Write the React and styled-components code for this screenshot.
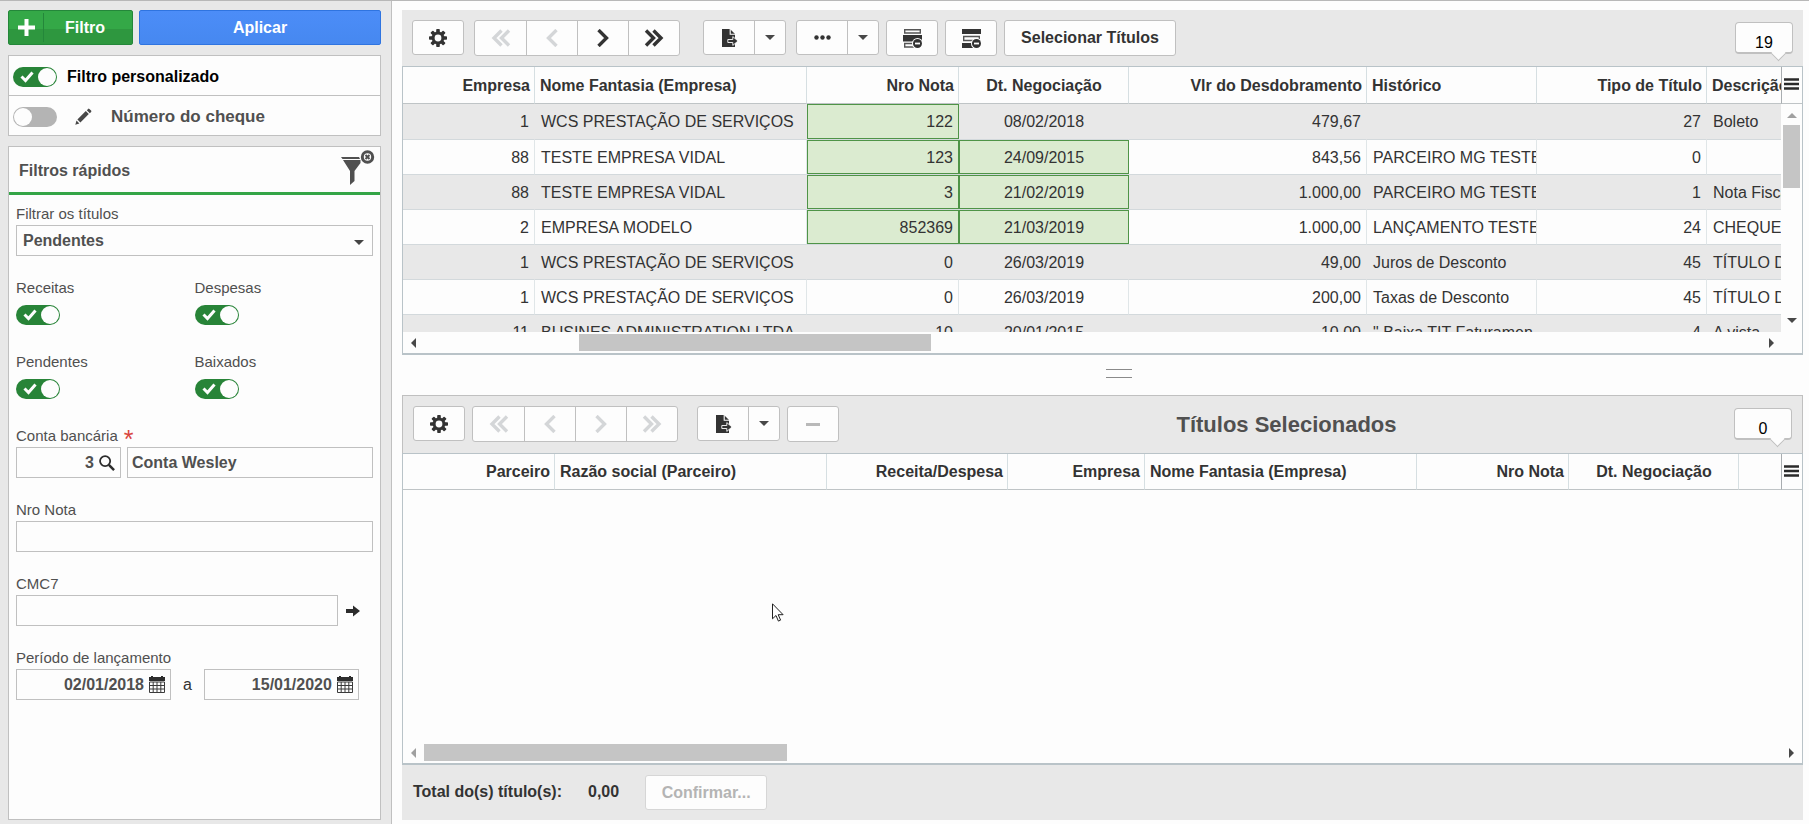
import React from 'react';
import styled, { createGlobalStyle, css } from 'styled-components';

const Global = createGlobalStyle`
  *, *::before, *::after { box-sizing: border-box; }
  body { margin: 0; background: #fdfdfd; color: #333; font: 16px/20px "Liberation Sans", Arial, sans-serif; }
  button, input, select { font: inherit; color: inherit; }
`;

const line = '#bfc4c6';
const gray = '#e8e8e8';

/* ---------- page ---------- */
const Page = styled.div`
  display: flex;
  min-height: 100vh;
  border-top: 1px solid #b8b8b8;
`;
const Sidebar = styled.aside`
  flex: 0 0 392px;
  display: flex;
  flex-direction: column;
  gap: 10px;
  padding: 9px 10px 4px 8px;
  background: ${gray};
  border-right: 1px solid #c0c0c0;
`;
const Main = styled.main`
  flex: 1;
  min-width: 0;
  display: flex;
  flex-direction: column;
  padding: 9px 6px 4px 10px;
`;

/* ---------- sidebar ---------- */
const Actions = styled.div`
  display: flex;
  gap: 6px;
`;
const ActionButton = styled.button`
  height: 35px;
  padding: 0;
  border: 1px solid ${p => (p.$tone === 'green' ? '#24873a' : '#2f74e0')};
  border-radius: 2px;
  background: ${p => (p.$tone === 'green'
    ? 'linear-gradient(#34a847 0 55%, #2e973f 55%)'
    : 'linear-gradient(#4c8df8, #4688f0)')};
  color: #fff;
  font-weight: bold;
  display: flex;
  align-items: center;
  justify-content: center;
  ${p => (p.$grow ? 'flex: 1;' : 'flex: 0 0 125px;')}
`;
const PlusPart = styled.span`
  width: 35px;
  height: 29px;
  display: grid;
  place-items: center;
  border-right: 1px solid #24873a;
`;
const ButtonText = styled.span`
  flex: 1;
  padding-right: 6px;
`;
const Box = styled.section`
  background: #fdfdfd;
  border: 1px solid #c0c0c0;
  ${p => p.$grow && 'flex: 1;'}
`;
const CustomRow = styled.div`
  display: flex;
  align-items: center;
  height: ${p => (p.$first ? 40 : 39)}px;
  padding: 2px 0 0 4px;
  color: ${p => (p.$first ? '#000' : '#505050')};
  font-weight: bold;
  font-size: ${p => (p.$first ? 16 : 17)}px;
  border-bottom: ${p => (p.$first ? '1px solid #c0c0c0' : '0')};
`;
const CustomName = styled.label`
  margin-left: ${p => (p.$indent ? 19 : 10)}px;
`;
const EditButton = styled.button`
  margin-left: 18px;
  padding: 0;
  border: 0;
  background: none;
  display: flex;
`;
const QuickHead = styled.header`
  display: flex;
  align-items: center;
  justify-content: space-between;
  height: 48px;
  padding: 2px 5px 0 10px;
  border-bottom: 3px solid #34a547;
`;
const QuickTitle = styled.h2`
  margin: 0;
  font-size: 16px;
  color: #505050;
`;
const PlainButton = styled.button`
  flex: none;
  padding: 0;
  border: 0;
  background: none;
  display: flex;
`;
const Fields = styled.div`
  display: flex;
  flex-direction: column;
  gap: 23px;
  padding: 10px 7px;
`;
const ToggleRow = styled.div`
  display: flex;
`;
const Field = styled.div`
  flex: 1;
`;
const Label = styled.label`
  display: block;
  margin-bottom: 2px;
  color: #505050;
  font-size: 15px;
  line-height: 18px;
`;
const Required = styled.span`
  margin-left: 6px;
  color: #d9453d;
  font-size: 25px;
  line-height: 10px;
  vertical-align: -7px;
`;
const Control = styled.div`
  display: flex;
  align-items: center;
  height: 31px;
  gap: ${p => p.$gap || 6}px;
  padding-right: ${p => p.$inset || 0}px;
`;
const FrameBox = styled.div`
  display: flex;
  align-items: center;
  height: 31px;
  border: 1px solid #c0c0c0;
  padding-right: 5px;
  gap: 5px;
  flex: 0 0 ${p => p.$w}px;
`;
const TextInput = styled.input`
  width: 100%;
  min-width: 0;
  height: 31px;
  padding: 0 4px;
  border: 1px solid #c0c0c0;
  background: none;
  color: #505050;
  font-weight: bold;
  ${p => p.$bare && 'border: 0; height: 29px; padding: 0; text-align: right;'}
`;
const SelectWrap = styled.div`
  position: relative;
  display: flex;
`;
const Select = styled.select`
  appearance: none;
  width: 100%;
  height: 31px;
  padding: 0 6px;
  border: 1px solid #c0c0c0;
  border-radius: 0;
  background: none;
  color: #505050;
  font-weight: bold;
`;
const SelectArrow = styled.span`
  position: absolute;
  right: 9px;
  top: 15px;
  border: 5px solid transparent;
  border-top-color: #444;
  border-bottom: 0;
  pointer-events: none;
`;

/* ---------- switch ---------- */
const SwitchRoot = styled.span`
  position: relative;
  display: inline-flex;
  width: 44px;
  height: 20px;
`;
const SwitchInput = styled.input`
  appearance: none;
  margin: 0;
  width: 44px;
  height: 20px;
  border-radius: 10px;
  background: #b4b4b4;
  &:checked { background: #288438; }
  &::after {
    content: '';
    position: absolute;
    left: 1px;
    top: 1px;
    width: 18px;
    height: 18px;
    border-radius: 50%;
    background: #fdfdfd;
  }
  &:checked::after { left: 25px; }
`;
const SwitchTick = styled.svg`
  position: absolute;
  left: 7px;
  top: 3px;
  pointer-events: none;
`;

/* ---------- main panels ---------- */
const Panel = styled.section`
  display: flex;
  flex-direction: column;
  min-height: 0;
  ${p => (p.$fill ? 'flex: 1;' : 'flex: 0 0 345px;')}
`;
const Toolbar = styled.div`
  display: flex;
  align-items: flex-start;
  gap: 7px;
  background: ${gray};
  ${p => (p.$framed
    ? css`height: 58px; padding: 10px; border: 1px solid #c0c0c0; border-bottom: 0;`
    : css`height: 56px; padding: 10px;`)}
`;
const Group = styled.div`
  display: flex;
  height: ${p => (p.$tall ? 36 : 35)}px;
  margin-left: ${p => p.$space || 0}px;
  border: 1px solid #c0c0c0;
  border-radius: 3px;
  background: #fdfdfd;
`;
const toolWidths = { icon: 50, linked: 51, narrow: 31, text: 170 };
const Tool = styled.button`
  width: ${p => toolWidths[p.$size || 'icon']}px;
  padding: 0;
  border: 0;
  background: none;
  font-weight: bold;
  color: ${p => (p.disabled ? '#d4d6d8' : '#333')};
  display: flex;
  align-items: center;
  justify-content: center;
  & + & { border-left: 1px solid #c0c0c0; }
`;
const Title = styled.h1`
  flex: 1;
  margin: 0;
  text-align: center;
  color: #505050;
  font-size: 22px;
  line-height: 38px;
`;
const Counter = styled.output`
  position: relative;
  width: 58px;
  height: 32px;
  margin: ${p => (p.$end ? '2px 0 0 auto' : '2px 0 0')};
  border: 1px solid #c0c0c0;
  border-bottom-width: 2px;
  border-radius: 4px;
  background: #fdfdfd;
  color: #000;
  font-size: 16px;
  line-height: 40px;
  text-align: center;
  &::after {
    content: '';
    position: absolute;
    right: 8px;
    bottom: -7px;
    width: 11px;
    height: 11px;
    background: #fdfdfd;
    border: 1px solid #c0c0c0;
    border-width: 0 1px 1px 0;
    transform: rotate(45deg);
  }
`;
const GridFrame = styled.div`
  flex: 1;
  min-height: 0;
  display: grid;
  grid-template-columns: minmax(0, 1fr) 21px;
  grid-template-rows: minmax(0, 1fr) 21px;
  border: 1px solid #b9c3c8;
  border-bottom-width: 2px;
`;
const Viewport = styled.div`
  position: relative;
  overflow: hidden;
  min-height: 0;
`;
const Table = styled.table`
  table-layout: fixed;
  width: ${p => p.$w}px;
  border-collapse: separate;
  border-spacing: 0;
`;
const Th = styled.th`
  height: ${p => (p.$short ? 36 : 37)}px;
  padding: ${p => (p.$short ? 8 : 9)}px 4px 0 5px;
  border-right: 1px solid #d6dfe2;
  border-bottom: 1px solid ${line};
  text-align: ${p => p.$align};
  vertical-align: top;
  white-space: nowrap;
  overflow: hidden;
`;
const Tr = styled.tr`
  background: #fdfdfd;
  &:nth-child(odd) { background: ${gray}; }
`;
const Td = styled.td`
  height: 35px;
  padding: 8px 5px 0 6px;
  border-right: 1px solid #e0e6e8;
  border-bottom: 1px solid #d3d9dc;
  text-align: ${p => p.$align};
  vertical-align: top;
  white-space: nowrap;
  overflow: hidden;
  ${Tr}:nth-child(odd) & { border-right-color: ${gray}; }
  ${Tr}:first-child & { height: 36px; }
  ${p => p.$hit && css`
    padding-right: 6px;
    border-right: 0;
    background: #dbebd0;
    background-clip: padding-box;
    box-shadow: inset 0 0 0 1px #4f9447;
  `}
`;
const SideRail = styled.div`
  display: flex;
  flex-direction: column;
  min-height: 0;
`;
const MenuButton = styled.button`
  height: ${p => (p.$short ? 36 : 37)}px;
  padding: 0 2px 2px 0;
  border: 0;
  border-left: 1px solid #a9adb0;
  border-bottom: 1px solid ${line};
  background: none;
  display: grid;
  place-items: center;
`;
const VScroll = styled.div`
  flex: 1;
  display: flex;
  flex-direction: column;
  align-items: center;
  padding: 9px 0;
`;
const VThumb = styled.div`
  width: 17px;
  height: 63px;
  margin: 7px 0 auto;
  background: #c5c5c5;
`;
const HScroll = styled.div`
  display: flex;
  align-items: center;
  padding: 0 7px 0 8px;
`;
const HThumb = styled.div`
  width: ${p => p.$w}%;
  height: 17px;
  margin: 0 auto 0 ${p => p.$at}px;
  background: #c5c5c5;
`;
const Arrow = styled.span`
  width: 0;
  height: 0;
  border: 5px solid transparent;
  color: ${p => (p.$off ? '#a0a0a0' : '#484848')};
  ${p => p.$dir === 'left' && 'border-right-color: currentColor; border-left: 0;'}
  ${p => p.$dir === 'right' && 'border-left-color: currentColor; border-right: 0;'}
  ${p => p.$dir === 'up' && 'border-bottom-color: currentColor; border-top: 0;'}
  ${p => p.$dir === 'down' && 'border-top-color: currentColor; border-bottom: 0;'}
`;
const Splitter = styled.div`
  height: 40px;
  display: grid;
  place-content: center;
  padding: 0 0 4px 32px;
`;
const Grip = styled.span`
  width: 26px;
  height: 9px;
  border: 1px solid #8a8a8a;
  border-width: 1px 0;
`;
const Footer = styled.footer`
  display: flex;
  align-items: center;
  height: 55px;
  padding: 0 11px;
  background: ${gray};
  font-weight: bold;
`;
const FooterText = styled.span`
  padding-bottom: 2px;
`;
const Total = styled.output`
  margin: 0 26px;
  padding-bottom: 2px;
`;
const ConfirmButton = styled.button`
  width: 122px;
  height: 35px;
  border: 1px solid #d6d6d6;
  border-radius: 3px;
  background: #fdfdfd;
  color: #b4b4b4;
  font-weight: bold;
`;
const Pointer = styled.svg`
  position: absolute;
  left: 369px;
  top: 149px;
`;

/* ---------- icons ---------- */
const GearIcon = () => (
  <svg width="18" height="18" viewBox="0 0 18 18" aria-hidden="true">
    <g fill="currentColor">
      {[0, 45, 90, 135].map(a => (
        <rect key={a} x="7.200" y="0" width="3.600" height="18" rx=".8" transform={`rotate(${a} 9 9)`} />
      ))}
      <circle cx="9" cy="9" r="6.400" />
    </g>
    <circle cx="9" cy="9" r="3.400" fill="#fdfdfd" />
  </svg>
);
const Chevron = ({ dir, double }) => (
  <svg width="20" height="18" viewBox="0 0 20 18" fill="none" stroke="currentColor" strokeWidth="3.400" aria-hidden="true">
    <g transform={dir === 'left' ? 'translate(20 0) scale(-1 1)' : undefined}>
      {double ? <path d="M2 1.500 9.500 9 2 16.500M9.500 1.500 17 9l-7.500 7.500" /> : <path d="M5.500 1 13.500 9l-8 8" />}
    </g>
  </svg>
);
const ExportIcon = () => (
  <svg width="18" height="18" viewBox="0 0 18 18" aria-hidden="true">
    <path fill="currentColor" d="M2 0h8l5 5v13H2z" />
    <path d="M10.200 0v5.200H15" fill="none" stroke="#fdfdfd" strokeWidth="1.100" />
    <path d="M7.800 10.500h5V7.600L18 12l-5.200 4.400v-2.900h-5z" fill="currentColor" stroke="#fdfdfd" strokeWidth=".9" />
  </svg>
);
const DotsIcon = () => (
  <svg width="17" height="5" viewBox="0 0 17 5" fill="currentColor" aria-hidden="true">
    <circle cx="2.500" cy="2.500" r="2.200" /><circle cx="8.500" cy="2.500" r="2.200" /><circle cx="14.500" cy="2.500" r="2.200" />
  </svg>
);
const MinusBadge = () => (
  <g>
    <circle cx="14.500" cy="14.500" r="5.500" fill="#fdfdfd" />
    <circle cx="14.500" cy="14.500" r="4.500" fill="#333" />
    <path d="M12 14.500h5" stroke="#fdfdfd" strokeWidth="1.800" />
  </g>
);
const RowRemoveIcon = () => (
  <svg width="19" height="19" viewBox="0 0 19 19" aria-hidden="true">
    <path d="M1.700 .7h15.600v3.300H1.700zM1.700 14.500h9v3.500h-9z" fill="none" stroke="#555" strokeWidth="1.400" />
    <path d="M0 6h19v6.500H0z" fill="#333" />
    <MinusBadge />
  </svg>
);
const RowsRemoveIcon = () => (
  <svg width="19" height="19" viewBox="0 0 19 19" aria-hidden="true">
    <path d="M0 0h19v5H0zM0 14h11v5H0z" fill="#333" />
    <path d="M1.700 7.500h15.600v4H1.700z" fill="none" stroke="#555" strokeWidth="1.400" />
    <MinusBadge />
  </svg>
);
const MenuIcon = () => (
  <svg width="15" height="12" viewBox="0 0 15 12" aria-hidden="true">
    <path d="M0 1.500h15M0 6h15M0 10.500h15" stroke="#2a2a2a" strokeWidth="2.600" />
  </svg>
);
const PencilIcon = () => (
  <svg width="17" height="17" viewBox="0 0 17 17" fill="#484848" aria-hidden="true">
    <path d="M.3 16.700l1.200-4.200 2.900 2.900zM2.400 11.500l8.400-8.400 3 3-8.400 8.400zM11.800 2.200l1.300-1.300q.6-.6 1.300 0l1.700 1.700q.6.700 0 1.300L14.800 5.200z" />
  </svg>
);
const FunnelIcon = () => (
  <svg width="34" height="42" viewBox="0 0 34 42" aria-hidden="true">
    <path d="M0 7h18l1 2H1.500zM2 10h17.500v3L13.500 21v10l-4.500 4V21z" fill="#505050" />
    <circle cx="26.500" cy="7" r="5.200" fill="#fdfdfd" stroke="#505050" strokeWidth="3" />
    <path d="M24.500 5l4 4M28.500 5l-4 4" stroke="#505050" strokeWidth="2" />
  </svg>
);
const SearchIcon = () => (
  <svg width="16" height="16" viewBox="0 0 17 17" fill="none" stroke="#2c2c2c" aria-hidden="true">
    <circle cx="6.500" cy="6.500" r="5.400" strokeWidth="1.900" />
    <path d="M10.500 10.500l5.500 5.500" strokeWidth="2.700" />
  </svg>
);
const CalendarIcon = () => (
  <svg width="16" height="17" viewBox="0 0 16 17" aria-hidden="true">
    <path d="M0 1h2V0h2v1h8V0h2v1h2v4H0z" fill="#2c2c2c" />
    <path d="M.5 6v10.500h15V6zM0 9.500h16M0 13h16M4.200 6v10M8 6v10M11.800 6v10" fill="none" stroke="#3a3a3a" />
  </svg>
);
const GoIcon = () => (
  <svg width="14" height="12" viewBox="0 0 14 12" aria-hidden="true">
    <path d="M0 4h7V.5L14 6l-7 5.500V8H0z" fill="#2c2c2c" />
  </svg>
);

const Switch = ({ id, on }) => (
  <SwitchRoot>
    <SwitchInput id={id} type="checkbox" role="switch" defaultChecked={on} />
    {on && (
      <SwitchTick width="14" height="13" viewBox="0 0 14 13" fill="none" stroke="#fdfdfd" strokeWidth="3">
        <path d="M1.500 6.500l4 4 7-8" />
      </SwitchTick>
    )}
  </SwitchRoot>
);

const ToggleField = ({ id, label }) => (
  <Field>
    <Label htmlFor={id}>{label}</Label>
    <Control><Switch id={id} on /></Control>
  </Field>
);

const Navigation = ({ atStart, atEnd, space }) => (
  <Group $tall $space={space}>
    <Tool $size="linked" disabled={atStart} aria-label="Primeiro"><Chevron dir="left" double /></Tool>
    <Tool $size="linked" disabled={atStart} aria-label="Anterior"><Chevron dir="left" /></Tool>
    <Tool $size="linked" disabled={atEnd} aria-label="Próximo"><Chevron dir="right" /></Tool>
    <Tool $size="linked" disabled={atEnd} aria-label="Último"><Chevron dir="right" double /></Tool>
  </Group>
);

const SplitTool = ({ label, space, children }) => (
  <Group $space={space}>
    <Tool aria-label={label}>{children}</Tool>
    <Tool $size="narrow" aria-label={`${label}: opções`}><Arrow $dir="down" /></Tool>
  </Group>
);

const DataGrid = ({ columns, rows = [], short, vertical, thumb, children }) => (
  <GridFrame>
    <Viewport>
      <Table $w={columns.reduce((sum, c) => sum + c.w, 0)}>
        <colgroup>{columns.map((c, i) => <col key={i} width={c.w} />)}</colgroup>
        <thead>
          <tr>{columns.map((c, i) => <Th key={i} $short={short} $align={c.align} scope="col">{c.name}</Th>)}</tr>
        </thead>
        <tbody>
          {rows.map((r, y) => (
            <Tr key={y}>
              {r.cells.map((v, x) => <Td key={x} $align={columns[x].align} $hit={r.hits.includes(x)}>{v}</Td>)}
            </Tr>
          ))}
        </tbody>
      </Table>
      {children}
    </Viewport>
    <SideRail>
      <MenuButton $short={short} aria-label="Colunas"><MenuIcon /></MenuButton>
      {vertical && (
        <VScroll><Arrow $dir="up" $off /><VThumb /><Arrow $dir="down" /></VScroll>
      )}
    </SideRail>
    <HScroll>
      <Arrow $dir="left" $off={!vertical} />
      <HThumb $w={thumb.w} $at={thumb.at} />
      {vertical && <Arrow $dir="right" />}
    </HScroll>
    {!vertical && <HScroll><Arrow $dir="right" /></HScroll>}
  </GridFrame>
);

const titleColumns = [
  { name: 'Empresa', w: 132, align: 'right' },
  { name: 'Nome Fantasia (Empresa)', w: 272, align: 'left' },
  { name: 'Nro Nota', w: 152, align: 'right' },
  { name: 'Dt. Negociação', w: 170, align: 'center' },
  { name: 'Vlr do Desdobramento', w: 238, align: 'right' },
  { name: 'Histórico', w: 170, align: 'left' },
  { name: 'Tipo de Título', w: 170, align: 'right' },
  { name: 'Descrição', w: 170, align: 'left' },
];
const titleRows = [
  { hits: [2], cells: ['1', 'WCS PRESTAÇÃO DE SERVIÇOS', '122', '08/02/2018', '479,67', '', '27', 'Boleto'] },
  { hits: [2, 3], cells: ['88', 'TESTE EMPRESA VIDAL', '123', '24/09/2015', '843,56', 'PARCEIRO MG TESTE', '0', ''] },
  { hits: [2, 3], cells: ['88', 'TESTE EMPRESA VIDAL', '3', '21/02/2019', '1.000,00', 'PARCEIRO MG TESTE', '1', 'Nota Fiscal'] },
  { hits: [2, 3], cells: ['2', 'EMPRESA MODELO', '852369', '21/03/2019', '1.000,00', 'LANÇAMENTO TESTE', '24', 'CHEQUE'] },
  { hits: [], cells: ['1', 'WCS PRESTAÇÃO DE SERVIÇOS', '0', '26/03/2019', '49,00', 'Juros de Desconto', '45', 'TÍTULO DESCONTO'] },
  { hits: [], cells: ['1', 'WCS PRESTAÇÃO DE SERVIÇOS', '0', '26/03/2019', '200,00', 'Taxas de Desconto', '45', 'TÍTULO DESCONTO'] },
  { hits: [], cells: ['11', 'BUSINES ADMINISTRATION LTDA', '10', '20/01/2015', '10,00', '" Baixa TIT Faturamen', '4', 'A vista'] },
];
const selectedColumns = [
  { name: 'Parceiro', w: 152, align: 'right' },
  { name: 'Razão social (Parceiro)', w: 272, align: 'left' },
  { name: 'Receita/Despesa', w: 181, align: 'right' },
  { name: 'Empresa', w: 137, align: 'right' },
  { name: 'Nome Fantasia (Empresa)', w: 272, align: 'left' },
  { name: 'Nro Nota', w: 152, align: 'right' },
  { name: 'Dt. Negociação', w: 170, align: 'center' },
  { name: '', w: 170, align: 'right' },
];

export default function App() {
  return (
    <Page>
      <Global />
      <Sidebar>
        <Actions>
          <ActionButton $tone="green">
            <PlusPart>
              <svg width="17" height="17" viewBox="0 0 17 17" stroke="#fff" strokeWidth="4" aria-hidden="true">
                <path d="M0 8.500h17M8.500 0v17" />
              </svg>
            </PlusPart>
            <ButtonText>Filtro</ButtonText>
          </ActionButton>
          <ActionButton $tone="blue" $grow>Aplicar</ActionButton>
        </Actions>
        <Box>
          <CustomRow $first>
            <Switch id="custom" on />
            <CustomName htmlFor="custom">Filtro personalizado</CustomName>
          </CustomRow>
          <CustomRow>
            <Switch id="cheque" />
            <EditButton aria-label="Editar filtro"><PencilIcon /></EditButton>
            <CustomName htmlFor="cheque" $indent>Número do cheque</CustomName>
          </CustomRow>
        </Box>
        <Box $grow>
          <QuickHead>
            <QuickTitle>Filtros rápidos</QuickTitle>
            <PlainButton aria-label="Limpar filtros"><FunnelIcon /></PlainButton>
          </QuickHead>
          <Fields>
            <Field>
              <Label htmlFor="status">Filtrar os títulos</Label>
              <SelectWrap>
                <Select id="status" defaultValue="Pendentes"><option>Pendentes</option></Select>
                <SelectArrow />
              </SelectWrap>
            </Field>
            <ToggleRow>
              <ToggleField id="receitas" label="Receitas" />
              <ToggleField id="despesas" label="Despesas" />
            </ToggleRow>
            <ToggleRow>
              <ToggleField id="pendentes" label="Pendentes" />
              <ToggleField id="baixados" label="Baixados" />
            </ToggleRow>
            <Field>
              <Label htmlFor="conta">Conta bancária<Required>*</Required></Label>
              <Control>
                <FrameBox $w={105}>
                  <TextInput id="conta" $bare defaultValue="3" />
                  <PlainButton aria-label="Pesquisar conta"><SearchIcon /></PlainButton>
                </FrameBox>
                <TextInput aria-label="Nome da conta" defaultValue="Conta Wesley" />
              </Control>
            </Field>
            <Field>
              <Label htmlFor="nota">Nro Nota</Label>
              <Control><TextInput id="nota" /></Control>
            </Field>
            <Field>
              <Label htmlFor="cmc7">CMC7</Label>
              <Control $gap={8} $inset={13}>
                <TextInput id="cmc7" />
                <PlainButton aria-label="Ler CMC7"><GoIcon /></PlainButton>
              </Control>
            </Field>
            <Field>
              <Label htmlFor="de">Período de lançamento</Label>
              <Control $gap={12}>
                <FrameBox $w={155}>
                  <TextInput id="de" $bare defaultValue="02/01/2018" />
                  <PlainButton aria-label="Data inicial"><CalendarIcon /></PlainButton>
                </FrameBox>
                <span>a</span>
                <FrameBox $w={155}>
                  <TextInput aria-label="Até" $bare defaultValue="15/01/2020" />
                  <PlainButton aria-label="Data final"><CalendarIcon /></PlainButton>
                </FrameBox>
              </Control>
            </Field>
          </Fields>
        </Box>
      </Sidebar>

      <Main>
        <Panel>
          <Toolbar>
            <Group><Tool aria-label="Configurações"><GearIcon /></Tool></Group>
            <Navigation atStart space={3} />
            <SplitTool label="Exportar" space={16}><ExportIcon /></SplitTool>
            <SplitTool label="Mais" space={3}><DotsIcon /></SplitTool>
            <Group $tall><Tool aria-label="Remover linha"><RowRemoveIcon /></Tool></Group>
            <Group $tall><Tool aria-label="Remover linhas"><RowsRemoveIcon /></Tool></Group>
            <Group $tall><Tool $size="text">Selecionar Títulos</Tool></Group>
            <Counter $end>19</Counter>
          </Toolbar>
          <DataGrid columns={titleColumns} rows={titleRows} vertical thumb={{ w: 25.8, at: 163 }} />
        </Panel>

        <Splitter role="separator"><Grip /></Splitter>

        <Panel $fill>
          <Toolbar $framed>
            <Group><Tool aria-label="Configurações"><GearIcon /></Tool></Group>
            <Navigation atStart atEnd />
            <SplitTool label="Exportar" space={12}><ExportIcon /></SplitTool>
            <Group $tall>
              <Tool disabled aria-label="Remover">
                <svg width="14" height="3" aria-hidden="true"><path d="M0 1.500h14" stroke="#b9b9b9" strokeWidth="3" /></svg>
              </Tool>
            </Group>
            <Title>Títulos Selecionados</Title>
            <Counter>0</Counter>
          </Toolbar>
          <DataGrid columns={selectedColumns} short thumb={{ w: 26.6, at: 8 }}>
            <Pointer width="12" height="19" viewBox="0 0 12 19" aria-hidden="true">
              <path d="M.5 .8v15l3.500-3.300 2.400 5.600 2.200-1-2.400-5.400h4.900z" fill="#fff" stroke="#222" />
            </Pointer>
          </DataGrid>
          <Footer>
            <FooterText>Total do(s) título(s):</FooterText>
            <Total>0,00</Total>
            <ConfirmButton disabled>Confirmar...</ConfirmButton>
          </Footer>
        </Panel>
      </Main>
    </Page>
  );
}
